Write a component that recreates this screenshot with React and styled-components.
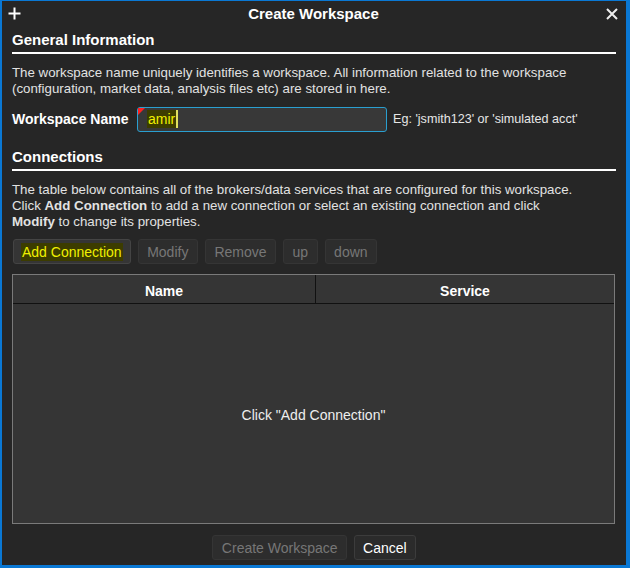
import styled, { createGlobalStyle } from 'styled-components';

const GlobalStyle = createGlobalStyle`
    html, body {
        margin: 0;
        padding: 0;
        background: #262626;
    }
    * {
        box-sizing: border-box;
    }
`

const Window = styled.div`
    width: 630px;
    height: 568px;
    background: #262626;
    border-style: solid;
    border-color: #0a78d4;
    border-width: 1px 4px 3px 2px;
    color: #e6e6e6;
    font-family: "Liberation Sans", Arial, sans-serif;
    font-size: 13.3px;
    display: flex;
    flex-direction: column;
`

const TitleBar = styled.div`
    height: 26px;
    display: flex;
    align-items: center;
    justify-content: space-between;
    padding: 0 8px 1px 6px;
    flex-shrink: 0;
`

const Title = styled.div`
    font-weight: bold;
    font-size: 15px;
    color: #fff;
`

const Body = styled.div`
    flex: 1;
    display: flex;
    flex-direction: column;
    padding: 4px 10px 0 10px;
    min-height: 0;
`

const SectionTitle = styled.div`
    font-weight: bold;
    font-size: 15px;
    color: #fff;
    padding-bottom: 4px;
    border-bottom: 2px solid #fff;
    line-height: 17px;
`

const Para = styled.p`
    margin: ${p => p.$top || 10}px 0 0 0;
    line-height: 16px;
    color: #e2e2e2;
    white-space: nowrap;
`

const NameRow = styled.div`
    display: flex;
    align-items: center;
    margin-top: 9px;
    height: 26px;
`

const Label = styled.span`
    font-weight: bold;
    font-size: 14px;
    width: 125px;
    color: #fff;
`

const InputBox = styled.div`
    position: relative;
    width: 250px;
    height: 25px;
    border: 1px solid #2a9fd0;
    border-radius: 3px;
    background: #383838;
    display: flex;
    align-items: center;
    padding-left: 9px;
`

const Corner = styled.div`
    position: absolute;
    left: 0;
    top: 0;
    width: 0;
    height: 0;
    border-top: 7px solid #ff2020;
    border-right: 7px solid transparent;
`

const Typed = styled.span`
    color: #f0f000;
    background: #3c3c00;
    font-size: 14px;
    padding: 0 1px;
    line-height: 18px;
    border-right: 2px solid #e0e060;
`

const Hint = styled.span`
    margin-left: 6px;
    font-size: 12.6px;
    color: #e6e6e6;
`

const Gap = styled.div`
    height: ${p => p.$h}px;
    flex-shrink: 0;
`

const ButtonRow = styled.div`
    display: flex;
    gap: 7px;
    margin-top: 9px;
    padding-left: 1px;
`

const Btn = styled.button`
    height: 25px;
    padding: 0 ${p => p.$active ? 7 : 8.5}px;
    font-family: "Liberation Sans", Arial, sans-serif;
    font-size: 14px;
    background: #2d2d2d;
    border: 1px solid #353535;
    border-radius: 3px;
    color: ${p => p.$active ? '#f0f000' : '#777'};
    ${p => p.$active && `
        background: #353535;
        border-color: #444;
    `}
    ${p => p.$light && `
        padding: 0 8px;
        color: #fff;
        background: #2b2b2b;
        border-color: #3c3c3c;
    `}
`

const Highlight = styled.span`
    background: #3c3c00;
    padding: 1px 1px;
`

const Table = styled.div`
    margin-top: 10px;
    margin-right: 1px;
    height: 250px;
    flex-shrink: 0;
    border: 1px solid #7a7a7a;
    background: #353535;
    display: flex;
    flex-direction: column;
`

const HeaderRow = styled.div`
    display: grid;
    grid-template-columns: 302px 1fr;
    height: 29px;
    border-bottom: 1px solid #111;
`

const HeaderCell = styled.div`
    display: flex;
    align-items: center;
    justify-content: center;
    padding-top: 3px;
    font-weight: bold;
    color: #fff;
    font-size: 14px;
    border-left: ${p => p.$divider ? '1px solid #111' : 'none'};
`

const EmptyMsg = styled.div`
    flex: 1;
    display: flex;
    align-items: center;
    justify-content: center;
    padding-top: 2px;
    color: #eee;
    font-size: 14px;
`

const Footer = styled.div`
    display: flex;
    justify-content: center;
    gap: 7px;
    margin-top: 11px;
`

function PlusIcon() {
    return (
        <svg width="13" height="13" viewBox="0 0 13 13">
            <path d="M6.5 0.5v12M0.5 6.5h12" stroke="#fff" strokeWidth="2" />
        </svg>
    );
}

function CloseIcon() {
    return (
        <svg width="12" height="12" viewBox="0 0 12 12">
            <path d="M1 1l10 10M11 1L1 11" stroke="#eee" strokeWidth="2" />
        </svg>
    );
}

export default function App() {
    return (
        <>
            <GlobalStyle />
            <Window>
                <TitleBar>
                    <PlusIcon />
                    <Title>Create Workspace</Title>
                    <CloseIcon />
                </TitleBar>
                <Body>
                    <SectionTitle>General Information</SectionTitle>
                    <Para $top={11}>
                        The workspace name uniquely identifies a workspace. All information related to the workspace<br />
                        (configuration, market data, analysis files etc) are stored in here.
                    </Para>
                    <NameRow>
                        <Label>Workspace Name</Label>
                        <InputBox>
                            <Corner />
                            <Typed>amir</Typed>
                        </InputBox>
                        <Hint>Eg: 'jsmith123' or 'simulated acct'</Hint>
                    </NameRow>
                    <Gap $h={16} />
                    <SectionTitle>Connections</SectionTitle>
                    <Para $top={11}>
                        The table below contains all of the brokers/data services that are configured for this workspace.<br />
                        Click <b>Add Connection</b> to add a new connection or select an existing connection and click<br />
                        <b>Modify</b> to change its properties.
                    </Para>
                    <ButtonRow>
                        <Btn $active><Highlight>Add Connection</Highlight></Btn>
                        <Btn>Modify</Btn>
                        <Btn>Remove</Btn>
                        <Btn>up</Btn>
                        <Btn>down</Btn>
                    </ButtonRow>
                    <Table>
                        <HeaderRow>
                            <HeaderCell>Name</HeaderCell>
                            <HeaderCell $divider>Service</HeaderCell>
                        </HeaderRow>
                        <EmptyMsg>Click "Add Connection"</EmptyMsg>
                    </Table>
                    <Footer>
                        <Btn>Create Workspace</Btn>
                        <Btn $light>Cancel</Btn>
                    </Footer>
                </Body>
            </Window>
        </>
    );
}
